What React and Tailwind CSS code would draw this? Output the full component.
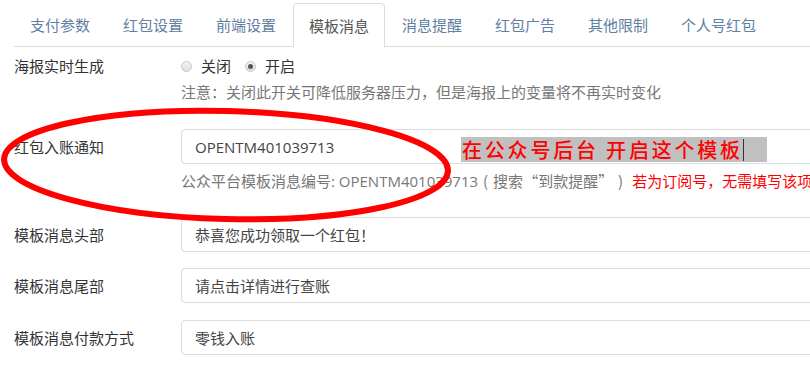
const tabs = ["支付参数", "红包设置", "前端设置", "模板消息", "消息提醒", "红包广告", "其他限制", "个人号红包"];

const font = { fontFamily: '"Open Sans", "Noto Sans CJK SC", sans-serif' };
const cjk = { fontFamily: '"Noto Sans CJK SC", sans-serif' };

function Radio({ checked, label }) {
  return (
    <label className="flex items-center gap-[9px] mr-[14px]">
      <span className="w-[11px] h-[11px] rounded-full border border-[#c8c8c8] bg-gradient-to-b from-[#f4f4f4] to-[#dedede] flex items-center justify-center">
        {checked && <span className="w-[5px] h-[5px] rounded-full bg-[#555]" />}
      </span>
      <span className="text-[#333]">{label}</span>
    </label>
  );
}

function InputRow({ label, value, className }) {
  return (
    <div className={"flex items-center " + className}>
      <div className="w-[167px] shrink-0 whitespace-nowrap text-[#333]">{label}</div>
      <div className="w-[700px] h-[35px] shrink-0 border border-[#dcdcdc] rounded-[4px] px-[13px] flex items-center text-[#444]">
        {value}
      </div>
    </div>
  );
}

// full-width punctuation box, as the original CJK font renders it
function FW({ children, align = "text-center" }) {
  return <span className={"inline-block w-[15px] " + align} style={cjk}>{children}</span>;
}

export default function App() {
  return (
    <div className="relative w-[810px] h-[378px] overflow-hidden bg-white text-[15px] leading-[20px]" style={font}>
      <div className="pl-[14px]">
        {/* tabs */}
        <div className="flex h-[47px] border-b border-[#dddddd] w-[900px]">
          {tabs.map((t, i) => (
            <div
              key={t}
              className={
                "mt-[3px] mr-[1px] h-[44px] px-[15px] flex items-center whitespace-nowrap rounded-t-[4px] " +
                (i === 3
                  ? "border border-[#dddddd] border-b-white bg-white text-[#555] -mb-px h-[45px]"
                  : "border border-transparent text-[#5f7fa3]")
              }
            >
              {t}
            </div>
          ))}
        </div>

        {/* poster realtime */}
        <div className="flex mt-[9px]">
          <div className="w-[167px] shrink-0 text-[#333]">海报实时生成</div>
          <div className="flex items-center">
            <Radio label="关闭" />
            <Radio checked label="开启" />
          </div>
        </div>
        <div className="ml-[167px] mt-[6px] text-[#777] whitespace-nowrap">
          注意<span style={cjk}>：</span>关闭此开关可降低服务器压力<span style={cjk}>，</span>但是海报上的变量将不再实时变化
        </div>

        <InputRow label="红包入账通知" value="OPENTM401039713" className="mt-[27px]" />
        <div className="ml-[167px] mt-[7px] whitespace-nowrap text-[#777]">
          公众平台模板消息编号: OPENTM401039713<FW>(</FW>搜索<FW align="text-right">“</FW>到款提醒<FW align="text-left">”</FW><FW>)</FW>
          <span className="text-[#ff0000] ml-[4px]">若为订阅号<span style={cjk}>，</span>无需填写该项</span>
        </div>

        <InputRow label="模板消息头部" value="恭喜您成功领取一个红包！" className="mt-[26px]" />
        <InputRow label="模板消息尾部" value="请点击详情进行查账" className="mt-[16px]" />
        <InputRow label="模板消息付款方式" value="零钱入账" className="mt-[17px]" />
      </div>

      {/* annotation text over the input */}
      <div className="absolute left-[461px] top-[137px] w-[306px] h-[25px] bg-[#c0c0c0] flex items-center">
        <span className="text-[#ff0000] font-medium text-[20px] leading-[25px] tracking-[2.8px] pl-[1px] whitespace-nowrap" style={cjk}>
          在公众号后台 开启这个模板
        </span>
        <span className="w-px h-[22px] bg-[#333]" />
      </div>

      {/* red hand-drawn ellipse */}
      <svg className="absolute left-0 top-0 pointer-events-none" width="810" height="378">
        <ellipse cx="226" cy="165" rx="222" ry="54" fill="none" stroke="#ff0000" strokeWidth="6" transform="rotate(1.5 226 165)" />
      </svg>
    </div>
  );
}
